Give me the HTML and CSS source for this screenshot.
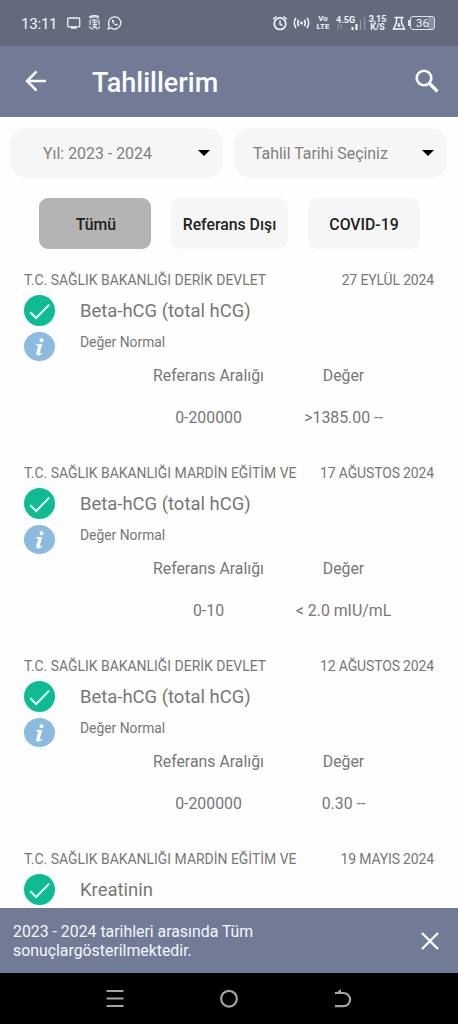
FILE: index.html
```html
<!DOCTYPE html>
<html lang="tr">
<head>
<meta charset="utf-8">
<meta name="viewport" content="width=device-width">
<title>Tahlillerim</title>
<link rel="stylesheet" href="styles.css">
</head>
<body>
<svg width="0" height="0" class="sprite" aria-hidden="true">
  <symbol id="check" viewBox="0 0 31 31">
    <circle cx="15.5" cy="15.5" r="15.5" fill="#0fbb93"/>
    <path d="M6.3 17.3 12.2 23 25.2 9.6" fill="none" stroke="#e8fff8" stroke-width="2"/>
  </symbol>
  <symbol id="info" viewBox="0 0 31 30">
    <ellipse cx="15.500" cy="14.500" rx="15.500" ry="14.500" fill="#8bbbe0"/>
    <circle cx="17.500" cy="8.300" r="2" fill="#fff"/>
    <path d="M12.300 12h6l-2.400 8.300q-.3 1.200.4 1.100.6-.2 1.200-1l.8.500q-1.700 2.600-4.100 2.500-2.600-.2-1.900-2.900l1.800-6.300q.2-1-2-1z" fill="#fff"/>
  </symbol>
</svg>
<header>
  <div class="status">
    <span class="clock">13:11</span>
    <svg class="notices" width="56" height="16" viewBox="0 0 56 16" fill="none" stroke="#eef1fa" stroke-width="1.300">
      <rect x="1.700" y="3" width="12" height="8.800" rx="1"/><path d="M5 12.700h5.500" stroke-width="2"/>
      <path d="M24 3.500q4.500-3.500 9 0M23 2q5-2.500 10-.5M24 5v5M33 5v5M25.500 5.500q3-1.500 6 0M26 7.300h2M29.500 7.300h2M26.500 9.500h4.500M28.700 4.500v8M23 11.500q1.500 2.500 4.500 2.500M34 11.500q-1.500 2.500-4.500 2.500M26.500 11.300q2.200 2 4.400 0" stroke-width="1.100"/>
      <path d="M42.200 14 43.200 10.600A6.100 6.100 0 1 1 45.300 13Z"/>
      <path d="M46 4.800q-.9 1.100 1 3.500 1.700 2.200 3.900 2.400l1.100-1.100-1.900-1.100-1 .7q-1-.6-1.500-1.700l.6-.8-.9-1.900z" fill="#eef1fa" stroke="none"/>
    </svg>
    <svg class="alarm" width="40" height="17" viewBox="0 0 40 17" fill="none" stroke="#f5f7ff" stroke-width="1.700">
      <circle cx="8" cy="8.700" r="5.800"/><path d="M1.200 4.200 4.500 1.500M14.800 4.200 11.500 1.500M8 5.500v3.600l2.500 1.500" stroke-width="1.400"/>
      <circle cx="29.500" cy="8" r="1.500" fill="#f5f7ff" stroke="none"/>
      <path d="M26.700 4.800q-2 3.200 0 6.400M32.300 4.800q2 3.200 0 6.400M24 2.800q-3.400 5.200 0 10.400M35 2.800q3.400 5.200 0 10.400" stroke-width="1.500"/>
    </svg>
    <span class="stack lte"><b>Vo</b><b>LTE</b></span>
    <span class="network"><b>4.5G</b>
      <svg width="30" height="15" viewBox="0 0 30 15"><path d="M2 8v5M5 8v5" stroke="#8f96a6" stroke-width="1.200"/><path d="M16.500 11v3" stroke="#fff" stroke-width="2"/><path d="M20.500 8v6" stroke="#fff" stroke-width="2"/><path d="M24.500 4v10M28.500 1v13" stroke="#9299a8" stroke-width="1.300"/></svg>
    </span>
    <span class="stack speed"><b>3,15</b><b>K/S</b></span>
    <svg class="flask" width="14" height="15" viewBox="0 0 14 15" fill="none" stroke="#f5f7ff" stroke-width="1.500"><path d="M2.500 1.500h9M4.500 2v4.500L1.500 13h11L9.500 6.500V2"/><path d="M7 7v4M5.500 9.500h3" stroke-width="1.300"/></svg>
    <span class="nub"></span><span class="battery">36</span>
  </div>
  <div class="appbar">
    <svg width="22" height="22" viewBox="0 0 22 22" fill="none" stroke="#fafcff" stroke-width="2.500"><path d="M21 11H2M11.500 1.500 2 11l9.500 9.500"/></svg>
    <h1>Tahlillerim</h1>
    <svg width="24" height="24" viewBox="0 0 24 24" fill="none" stroke="#fafcff"><circle cx="9" cy="9" r="7.300" stroke-width="2.600"/><path d="M14 14l8.500 8.500" stroke-width="3.200"/></svg>
  </div>
</header>
<main>
  <div class="filters">
    <div class="select year"><span>Yıl: 2023 - 2024</span><i class="caret"></i></div>
    <div class="select date"><span>Tahlil Tarihi Seçiniz</span><i class="caret"></i></div>
  </div>
  <nav class="tabs">
    <button class="tab active">Tümü</button>
    <button class="tab wide">Referans Dışı</button>
    <button class="tab covid">COVID-19</button>
  </nav>
  <section class="results">
    <article class="record">
      <div class="meta"><span>T.C. SAĞLIK BAKANLIĞI DERİK DEVLET</span><time>27 EYLÜL 2024</time></div>
      <div class="test"><svg class="ok"><use href="#check"/></svg><h2>Beta-hCG (total hCG)</h2></div>
      <div class="state"><svg class="info"><use href="#info"/></svg><p>Değer Normal</p></div>
      <div class="values"><span>Referans Aralığı</span><span>Değer</span><span>0-200000</span><span>&gt;1385.00 --</span></div>
    </article>
    <article class="record">
      <div class="meta"><span>T.C. SAĞLIK BAKANLIĞI MARDİN EĞİTİM VE</span><time>17 AĞUSTOS 2024</time></div>
      <div class="test"><svg class="ok"><use href="#check"/></svg><h2>Beta-hCG (total hCG)</h2></div>
      <div class="state"><svg class="info"><use href="#info"/></svg><p>Değer Normal</p></div>
      <div class="values"><span>Referans Aralığı</span><span>Değer</span><span>0-10</span><span>&lt; 2.0 mIU/mL</span></div>
    </article>
    <article class="record">
      <div class="meta"><span>T.C. SAĞLIK BAKANLIĞI DERİK DEVLET</span><time>12 AĞUSTOS 2024</time></div>
      <div class="test"><svg class="ok"><use href="#check"/></svg><h2>Beta-hCG (total hCG)</h2></div>
      <div class="state"><svg class="info"><use href="#info"/></svg><p>Değer Normal</p></div>
      <div class="values"><span>Referans Aralığı</span><span>Değer</span><span>0-200000</span><span>0.30 --</span></div>
    </article>
    <article class="record last">
      <div class="meta"><span>T.C. SAĞLIK BAKANLIĞI MARDİN EĞİTİM VE</span><time>19 MAYIS 2024</time></div>
      <div class="test"><svg class="ok"><use href="#check"/></svg><h2>Kreatinin</h2></div>
    </article>
  </section>
</main>
<footer>
  <div class="snackbar">
    <p>2023 - 2024 tarihleri arasında Tüm<br>sonuçlargösterilmektedir.</p>
    <svg width="18" height="18" viewBox="0 0 18 18" stroke="#fafcff" stroke-width="2.400"><path d="M1 1l16 16M17 1 1 17"/></svg>
  </div>
  <div class="navbar">
    <svg width="18" height="20" viewBox="0 0 18 20" stroke="#a3a3a3" stroke-width="2"><path d="M.5 2h17M.5 9.500h17M.5 17h17"/></svg>
    <svg width="20" height="20" viewBox="0 0 20 20" fill="none" stroke="#a3a3a3" stroke-width="2.200"><circle cx="10" cy="9.700" r="7.900"/></svg>
    <svg width="18" height="20" viewBox="0 0 18 20" fill="none" stroke="#a3a3a3" stroke-width="2.200"><path d="M1 4h8.500a6.600 6.600 0 0 1 0 13.200H1"/><path d="M.5 5 7 0V5z" fill="#a3a3a3" stroke="none"/></svg>
  </div>
</footer>
</body>
</html>
```
FILE: styles.css
```css
* { box-sizing: border-box; }
body {
  margin: 0;
  width: 458px;
  height: 1024px;
  overflow: hidden;
  display: flex;
  flex-direction: column;
  background: #fefefe;
  color: #777;
  font-family: Roboto, "Noto Sans", sans-serif;
}
svg { display: block; flex: none; }
.sprite { position: absolute; }
h1, h2, p { margin: 0; font-weight: 400; }
span, time, h1, h2 { white-space: nowrap; }

.status {
  height: 46px;
  padding: 0 21px;
  display: flex;
  align-items: center;
  background: #636a7c;
  color: #f1f4fc;
}
.clock { width: 45px; font-size: 15px; letter-spacing: -0.200px; padding-top: 1px; }
.notices { margin-right: 150px; }
.alarm { margin-right: 4px; }
.stack { display: flex; flex-direction: column; align-items: center; font-size: 8px; line-height: 8px; }
.lte { width: 14px; margin-right: 6px; }
.network { width: 30px; margin-right: 2px; font-size: 9px; line-height: 8px; }
.network svg { margin-top: -8px; }
.speed { width: 19px; margin-right: 5px; font-size: 9px; }
.flask { margin-right: 2px; }
.nub { width: 2px; height: 6px; background: #dce0eb; }
.battery {
  width: 25px;
  height: 14px;
  border: 1.500px solid #dce0eb;
  border-radius: 3px;
  font-size: 11.500px;
  line-height: 12px;
  text-align: center;
  background: linear-gradient(90deg, transparent 72%, #8990a0 72%);
}

.appbar {
  height: 71px;
  padding: 0 19px 1px 25px;
  display: flex;
  align-items: center;
  background: #727b96;
  color: #fafcff;
}
.appbar h1 { flex: 1; margin-left: 45px; font-size: 27px; font-weight: 500; line-height: 34px; padding-top: 3px; }

.filters { display: grid; grid-template-columns: 213px 213px; gap: 11px; padding: 11px 0 0 10px; }
.select {
  height: 50px;
  padding: 0 13px 0 33px;
  display: flex;
  align-items: center;
  justify-content: space-between;
  border-radius: 16px;
  background: #f6f6f6;
  color: #808080;
  font-size: 15.900px;
}
.date { padding-left: 19px; }
.caret { border: 6.500px solid transparent; border-top-color: #000; border-bottom: 0; }
.tabs { display: flex; padding: 20px 38px 0 39px; gap: 20px; }
.tab {
  width: 112px;
  height: 51px;
  padding: 2px 0 0;
  border: 0;
  border-radius: 9px;
  background: #f6f6f6;
  color: #222;
  font: 500 15.800px Roboto, sans-serif;
}
.wide { width: 117px; }
.active { background: #b4b4b4; padding-left: 2px; }

.results { padding: 21px 24px 0; }
.record { height: 193px; }
.meta { display: flex; justify-content: space-between; height: 20px; line-height: 20px; font-size: 13.950px; }
.meta time { font-size: 14px; letter-spacing: -0.150px; }
.test { display: flex; align-items: center; height: 31px; margin-top: 5px; }
.ok { width: 31px; height: 31px; }
.test h2 { margin-left: 25px; font-size: 18.450px; }
.state { display: flex; height: 30px; margin-top: 6px; }
.info { width: 31px; height: 30px; }
.state p { margin-left: 25px; font-size: 13.850px; line-height: 20px; }
.values {
  display: grid;
  grid-template-columns: 135px 135px;
  grid-template-rows: 42px 42px;
  padding-left: 117px;
  margin-top: -7px;
  text-align: center;
  line-height: 42px;
  font-size: 15.850px;
}

footer { position: fixed; bottom: 0; left: 0; width: 458px; }
.snackbar {
  height: 65px;
  padding: 0 19px 0 13px;
  display: flex;
  align-items: center;
  justify-content: space-between;
  background: #727b96;
  color: #f4f7ff;
  font-size: 15.850px;
  line-height: 18.500px;
}
.snackbar p { padding-top: 2px; }
.navbar {
  height: 51px;
  padding: 0 106px 0 105.500px;
  display: flex;
  align-items: center;
  justify-content: space-between;
  background: #000;
}
```
